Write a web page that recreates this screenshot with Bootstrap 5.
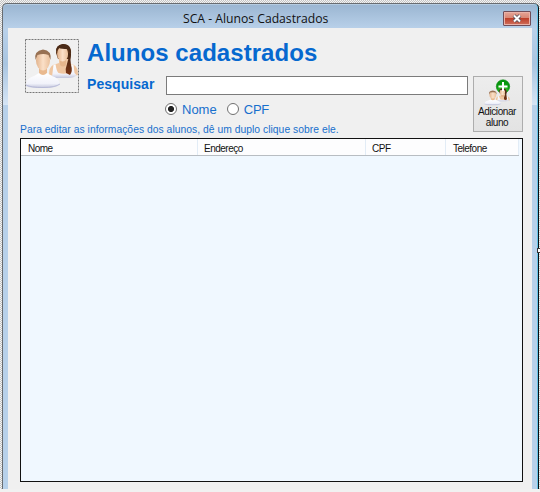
<!DOCTYPE html>
<html lang="pt-BR">
<head>
<meta charset="utf-8">
<title>SCA - Alunos Cadastrados</title>
<link href="https://cdn.jsdelivr.net/npm/bootstrap@5.3.0/dist/css/bootstrap.min.css" rel="stylesheet">
<style>
body{width:540px;height:492px;font-family:"Liberation Sans",Arial,sans-serif;color:#111;background-color:#fff;background-image:conic-gradient(#c4c4c4 25%,#f4f4f4 0 50%,#c4c4c4 0 75%,#f4f4f4 0);background-size:2px 2px}
.stage{padding:3px 1px 0 2px;height:489px}
.win{width:537px;height:486px;border:1px solid #686c70;border-bottom:0;border-right:1px solid #080c10;border-radius:5px 5px 0 0;background:linear-gradient(#9ab5d1,#b9d1ea 25px,#a9c5e0 60px,#d6e5f5 101px,#b8d1ea 101px);box-shadow:inset -1px 0 #64c4e6,inset 0 1px #b5cbe0;padding:0 5px}
.titlebar{height:24px}
.caption-text{font:12.2px/24px "Open Sans","Segoe UI",sans-serif;padding:3px 0 0 175px;letter-spacing:-.01px;white-space:nowrap}
.btn-x{width:28px;height:15px;border:1px solid #704d58;border-radius:1px;background:linear-gradient(#e5a597,#d98775 45%,#bd402b 50%,#d0705c);box-shadow:inset 0 0 0 1px #e9b2a8;margin:7px 2px 0 0}
.client{width:524px;height:461px;background:#f0f0f0;padding:11px 9px 0 12px}
.tools{height:84px}
.blue{color:#0668cf}
.photo{width:54px;height:54px;margin-left:5px}
.heading{font-size:24px;line-height:28px;font-weight:700;letter-spacing:.05px;white-space:nowrap}
.find{font-size:14px;line-height:17px;font-weight:700;width:79px;letter-spacing:.05px}
.finder{padding-top:9px}
.field{width:302px;height:19px;border:1px solid #7b7b7b;border-radius:0;padding:0 3px;background:#fff}
.options{padding:6px 0 0 78px}
.option{font-size:13px;line-height:17px;color:#176fcd}
.option + .option{margin-left:10px;letter-spacing:-.2px}
.dot{appearance:none;width:12px;height:12px;border:1px solid #707070;border-radius:50%;background:#fff;margin:0 5px 1px 0}
.dot:checked{background:radial-gradient(circle,#222 0 2.7px,#fff 3.4px)}
.add{width:50px;height:56px;border:1px solid #adadad;border-radius:0;background:linear-gradient(#ededed,#e3e3e3);font-size:10px;line-height:11px;letter-spacing:-.4px;color:#111;margin:37px 0 0 -1px;padding-right:2px!important}
.hint{font-size:10.3px;line-height:13px;letter-spacing:.04px;white-space:nowrap;height:15px;color:#176fcd}
.grid-list{width:503px;height:344px;border:1px solid #111;background:#f0f8ff}
.grid-head{width:498px;height:17px;background:#fdfdfe;border-bottom:1px solid #b8bdc2;font-size:10px;line-height:19px;letter-spacing:-.5px}
.grid-head div{padding-left:7px;border-right:1px solid #e2ecf6}
.grid-head .c2,.grid-head .c3{padding-left:6px}
.c1{width:177px}.c2{width:168px}.c3{width:80px}.c4{width:73px}
.handle{position:absolute;left:537px;top:248px;width:3px;height:5px;background:#fff;border:1px solid #333;border-right:0}
.foot{height:3px;background:#f1f1f1}
</style>
<script src="https://cdn.jsdelivr.net/npm/bootstrap@5.3.0/dist/js/bootstrap.bundle.min.js"></script>
</head>
<body class="overflow-hidden position-relative">
<svg width="0" height="0" class="position-absolute">
<defs>
<linearGradient id="skin"><stop offset="0" stop-color="#e2b38c"/><stop offset=".5" stop-color="#fbe0c8"/><stop offset="1" stop-color="#eac09b"/></linearGradient>
<linearGradient id="shirt" x2="0" y2="1"><stop offset="0" stop-color="#fff"/><stop offset=".7" stop-color="#f1f2fa"/><stop offset="1" stop-color="#c3c6dc"/></linearGradient>
<linearGradient id="hair" x2="0" y2="1"><stop offset="0" stop-color="#452815"/><stop offset="1" stop-color="#7b3515"/></linearGradient>
<radialGradient id="green" cy=".75"><stop offset="0" stop-color="#4be03a"/><stop offset="1" stop-color="#07960c"/></radialGradient>
<g id="people">
<path d="M24 36q0-8 4-10l6-2v-4h9v4l6 2q4 2 4 10-14 4-29 0z" fill="#efc6a1"/>
<path d="M27 38l1.500-12 2-.7q1 7 3 8.700 5 1.500 10 0 2-2 3-8.700l2 .7 1 8 2 2q-2 3-8 3H28z" fill="url(#shirt)"/>
<path d="M31 14q-1-8 7-9 9 0 8 11l-1 4H33z" fill="#5a3218"/>
<path d="M35 19h6v7q-3 3-6 0z" fill="#e6b68c"/>
<ellipse cx="37.600" cy="15" rx="5.500" ry="7.500" fill="url(#skin)"/>
<path d="M31 13q0-7 7-8 8 0 8 10l-3-5q-7 0-9-1-2 1-3 4z" fill="#4a2b18"/>
<path d="M43 14l3 1q-1 6 0 11 2 6-1 10l-4-2q-1-4 1-9 2-5 1-11z" fill="url(#hair)"/>
<path d="M1 47q0-8 8-10l5-3h8l5 3q7 2 8 8-2 4-17 4-14 0-17-2z" fill="url(#shirt)"/>
<path d="M1 46q5 2.500 17 2.500T35 45" fill="none" stroke="#b4b8d6" stroke-width=".9"/>
<path d="M14 28h8v6q-4 4-8 0z" fill="#e9b98f"/>
<ellipse cx="18" cy="21.500" rx="7" ry="10" fill="url(#skin)"/>
<path d="M10.500 21q-2-9 7.500-10.500 9 1 7.500 10.500l-2-5q-5-2-11 0z" fill="#987153"/>
</g>
</defs>
</svg>
<main class="stage">
<section class="win">
<header class="titlebar d-flex justify-content-between align-items-start">
<div class="caption-text">SCA - Alunos Cadastrados</div>
<button class="btn-x d-flex align-items-center justify-content-center p-0" aria-label="Fechar"><svg width="12" height="9" viewBox="0 0 12 9"><path d="M3 1.500l6 6M9 1.500l-6 6" stroke="#59525b" stroke-width="3.800"/><path d="M3 1.500l6 6M9 1.500l-6 6" stroke="#fff" stroke-width="2"/></svg></button>
</header>
<div class="client">
<div class="tools d-flex align-items-start">
<svg class="photo flex-shrink-0" viewBox="0 0 54 54"><rect x=".5" y=".5" width="53" height="53" fill="none" stroke="#777" stroke-dasharray="2 1"/><use href="#people"/></svg>
<div class="flex-grow-1 ps-2">
<h1 class="heading blue m-0">Alunos cadastrados</h1>
<div class="finder d-flex align-items-start"><label class="find blue" for="q">Pesquisar</label><input id="q" class="field"></div>
<div class="options d-flex">
<label class="option d-flex align-items-center"><input class="dot" type="radio" name="by" checked>Nome</label>
<label class="option d-flex align-items-center"><input class="dot" type="radio" name="by">CPF</label>
</div>
</div>
<button class="add d-flex flex-column align-items-center flex-shrink-0 p-0">
<svg width="32" height="29" viewBox="0 0 32 29" class="flex-shrink-0"><circle cx="22" cy="9.500" r="6.700" fill="url(#green)" stroke="#078a10" stroke-width=".6"/><use href="#people" transform="translate(3 9.500) scale(.49 .38)"/><path d="M22 5v9M17.500 9.500h9" stroke="#fff" stroke-width="2"/></svg>
<span>Adicionar</span><span>aluno</span>
</button>
</div>
<div class="hint">Para editar as informações dos alunos, dê um duplo clique sobre ele.</div>
<div class="grid-list">
<div class="grid-head d-flex"><div class="c1">Nome</div><div class="c2">Endereço</div><div class="c3">CPF</div><div class="c4">Telefone</div></div>
</div>
</div>
</section>
</main>
<div class="foot"></div>
<div class="handle"></div>
</body>
</html>
